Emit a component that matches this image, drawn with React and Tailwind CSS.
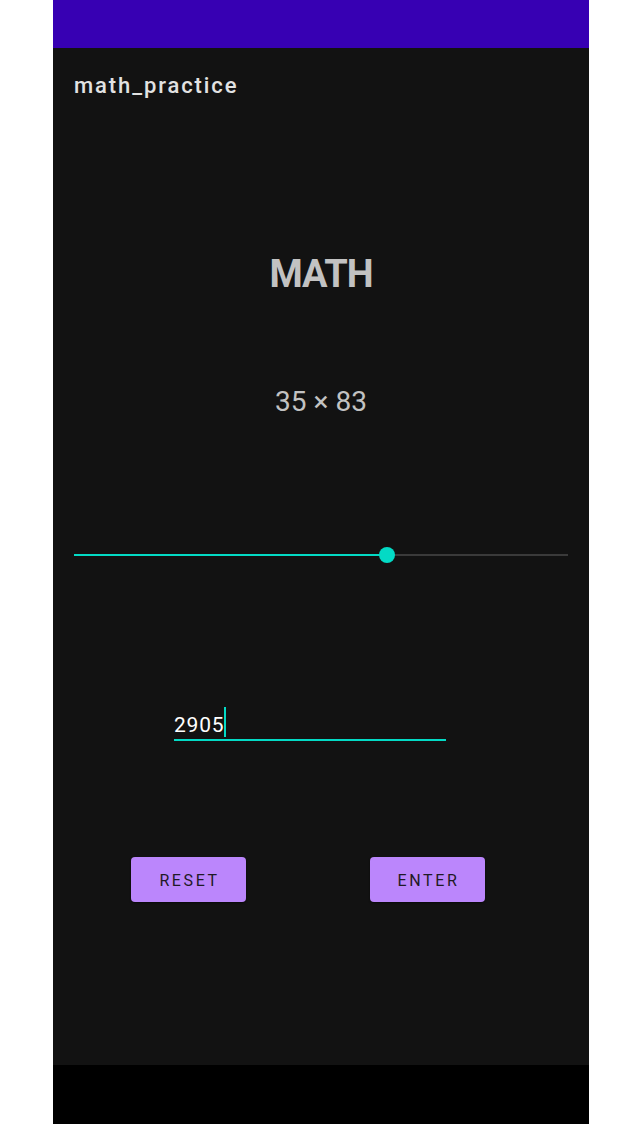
export default function App() {
  const progress = 63.4;

  return (
    <div className="min-h-[1132px] bg-white font-['Roboto',sans-serif]">
      <div className="ml-[53px] w-[536px] flex flex-col">
        {/* Status bar */}
        <div className="h-[48px] bg-[#3700B3]" />

        {/* Screen */}
        <div className="h-[1017px] bg-[#121212] flex flex-col">
          <div className="pt-[25px] pl-[21px] text-[22px] leading-[26px] font-medium tracking-[1.9px] text-[#e2e2e2]">
            math_practice
          </div>

          <div className="mt-[153px] text-center text-[38px] leading-[44px] font-bold tracking-[-1px] text-[#c2c2c2]">
            MATH
          </div>

          <div className="mt-[90px] text-center text-[28px] leading-[32px] text-[#c2c2c2]">
            35 × 83
          </div>

          {/* Slider */}
          <div className="mt-[129px] mx-[21px] h-[16px] relative flex items-center">
            <div className="w-full h-[2px] bg-[#3a3a3a]" />
            <div
              className="absolute left-0 h-[2px] bg-[#03DAC5]"
              style={{ width: `${progress}%` }}
            />
            <div
              className="absolute w-[16px] h-[16px] -ml-[8px] rounded-full bg-[#03DAC5]"
              style={{ left: `${progress}%` }}
            />
          </div>

          {/* Input */}
          <div className="mt-[147px] ml-[121px] w-[272px] h-[31px] border-b-2 border-[#03DAC5] flex items-start">
            <span className="text-[21px] leading-[30px] tracking-[0.8px] text-white">2905</span>
            <span className="mt-[-3px] w-[2px] h-[30px] bg-[#03DAC5]" />
          </div>

          {/* Buttons */}
          <div className="mt-[116px] pl-[78px] flex gap-[124px]">
            <button className="w-[115px] h-[45px] pt-[3px] pl-[2px] rounded-[4px] bg-[#BB86FC] text-[16px] tracking-[2.6px] text-[#1f1a26] shadow-[0_1px_2px_rgba(0,0,0,0.5)]">
              RESET
            </button>
            <button className="w-[115px] h-[45px] pt-[3px] pl-[2px] rounded-[4px] bg-[#BB86FC] text-[16px] tracking-[2.6px] text-[#1f1a26] shadow-[0_1px_2px_rgba(0,0,0,0.5)]">
              ENTER
            </button>
          </div>
        </div>

        {/* Navigation bar */}
        <div className="h-[59px] bg-black" />
      </div>
    </div>
  );
}
